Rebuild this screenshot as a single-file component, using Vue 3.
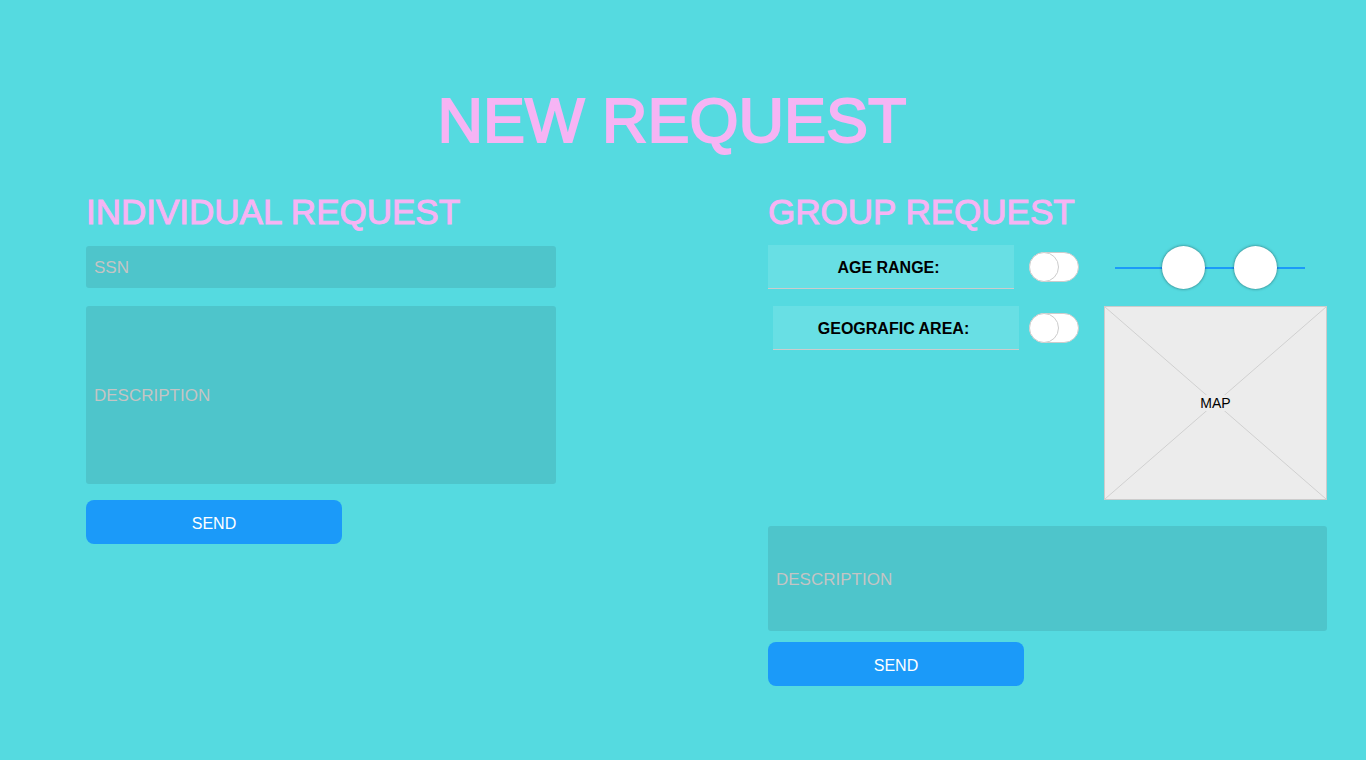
<script setup>
import { ref } from 'vue'

const ssn = ref('')
const individualText = ref('')
const groupText = ref('')
const useAge = ref(false)
const useArea = ref(false)
const ageFrom = ref(32)
const ageTo = ref(81)
</script>

<template>
  <main class="page">
    <h1 class="title">NEW REQUEST</h1>
    <div class="columns">
      <form class="individual" @submit.prevent>
        <h2 class="heading">INDIVIDUAL REQUEST</h2>
        <input v-model="ssn" class="field ssn" type="text" placeholder="SSN" aria-label="SSN" />
        <textarea
          v-model="individualText"
          class="field tall"
          placeholder="DESCRIPTION"
          aria-label="Individual request description"
        ></textarea>
        <button class="send" type="submit">SEND</button>
      </form>

      <form class="group" @submit.prevent>
        <h2 class="heading">GROUP REQUEST</h2>
        <div class="filters">
          <label class="name" for="use-age">AGE RANGE:</label>
          <input id="use-age" v-model="useAge" class="toggle" type="checkbox" />
          <div class="range">
            <input v-model="ageFrom" type="range" min="0" max="100" aria-label="Minimum age" />
            <input v-model="ageTo" type="range" min="0" max="100" aria-label="Maximum age" />
          </div>

          <label class="name area" for="use-area">GEOGRAFIC AREA:</label>
          <input id="use-area" v-model="useArea" class="toggle" type="checkbox" />
          <div class="map">
            <svg class="cross" viewBox="0 0 100 100" preserveAspectRatio="none" aria-hidden="true">
              <path d="M0 0L100 100M100 0L0 100" />
            </svg>
            <span class="map-name">MAP</span>
          </div>
        </div>
        <textarea
          v-model="groupText"
          class="field short"
          placeholder="DESCRIPTION"
          aria-label="Group request description"
        ></textarea>
        <button class="send" type="submit">SEND</button>
      </form>
    </div>
  </main>
</template>

<style>
body {
  background: #55dae0;
}
</style>

<style scoped>
.page,
.page * {
  box-sizing: border-box;
  font-family: "Liberation Sans", Arial, sans-serif;
}
.page {
  padding: 84px 39px 40px 86px;
}
.title {
  margin: 0 69px 36px 0;
  font-size: 63px;
  line-height: 72px;
  font-weight: 400;
  text-align: center;
  color: #f6b4f4;
  -webkit-text-stroke: 2px #f6b4f4;
}
.columns {
  display: grid;
  grid-template-columns: 470fr 559fr;
  column-gap: 212px;
}
.individual,
.group {
  display: flex;
  flex-direction: column;
  align-items: stretch;
  min-width: 0;
}
.heading {
  margin: 0;
  font-size: 35px;
  line-height: 40px;
  font-weight: 400;
  white-space: nowrap;
  color: #f6b4f4;
  -webkit-text-stroke: 1px #f6b4f4;
}
.field {
  display: block;
  width: 100%;
  margin: 0;
  border: 0;
  border-radius: 3px;
  padding: 2px 8px 0;
  background: #4ec5cb;
  color: #333;
  font-size: 17px;
  line-height: 22px;
  resize: none;
}
.field::placeholder {
  color: #c4c4c4;
  opacity: 1;
}
.ssn {
  height: 42px;
  margin: 14px 0 18px;
}
.tall {
  height: 178px;
  padding: 79px 8px 77px;
  margin-bottom: 16px;
}
.short {
  height: 105px;
  padding: 43px 8px 40px;
  margin: 26px 0 11px;
}
.send {
  width: 256px;
  height: 44px;
  border: 0;
  border-radius: 8px;
  padding: 4px 0 0;
  background: #1b9af9;
  color: #fff;
  font-size: 16px;
}
.filters {
  display: grid;
  grid-template-columns: 251px 65px 1fr;
  gap: 16px 10px;
  align-items: start;
  margin-top: 13px;
}
.name {
  display: flex;
  align-items: center;
  justify-content: center;
  width: 246px;
  height: 44px;
  padding: 2px 5px 0 0;
  border-bottom: 1px solid #ccc;
  background: #68dfe4;
  color: #000;
  font-size: 16px;
  font-weight: 700;
}
.area {
  justify-self: end;
}
.toggle {
  appearance: none;
  width: 50px;
  height: 30px;
  margin: 7px 0 0;
  border: 1px solid #ccc;
  border-radius: 15px;
  background: #fff;
}
.toggle::before {
  content: "";
  box-sizing: border-box;
  display: block;
  width: 30px;
  height: 30px;
  margin: -1px;
  border: 1px solid #ccc;
  border-radius: 50%;
  background: #fff;
}
.toggle:checked::before {
  margin-left: 19px;
}
.range {
  position: relative;
  height: 45px;
  margin: 0 22px 0 11px;
  background: linear-gradient(#1b9af9, #1b9af9) center 22px / 100% 2px no-repeat;
}
.range input {
  appearance: none;
  position: absolute;
  inset: 0;
  width: 100%;
  height: 45px;
  margin: 0;
  background: transparent;
  pointer-events: none;
}
.range input::-webkit-slider-thumb {
  appearance: none;
  width: 43px;
  height: 43px;
  border-radius: 50%;
  background: #fff;
  box-shadow: 0 0 3px rgba(0, 0, 0, 0.5);
  pointer-events: auto;
}
.map {
  position: relative;
  display: flex;
  align-items: center;
  justify-content: center;
  height: 194px;
  border: 1px solid #ccc;
  background: #ececec;
}
.cross {
  position: absolute;
  inset: 0;
  width: 100%;
  height: 100%;
}
.cross path {
  fill: none;
  stroke: #d0d0d0;
  stroke-width: 1;
  vector-effect: non-scaling-stroke;
}
.map-name {
  position: relative;
  background: #ececec;
  color: #000;
  font-size: 14px;
  line-height: 16px;
}
</style>
